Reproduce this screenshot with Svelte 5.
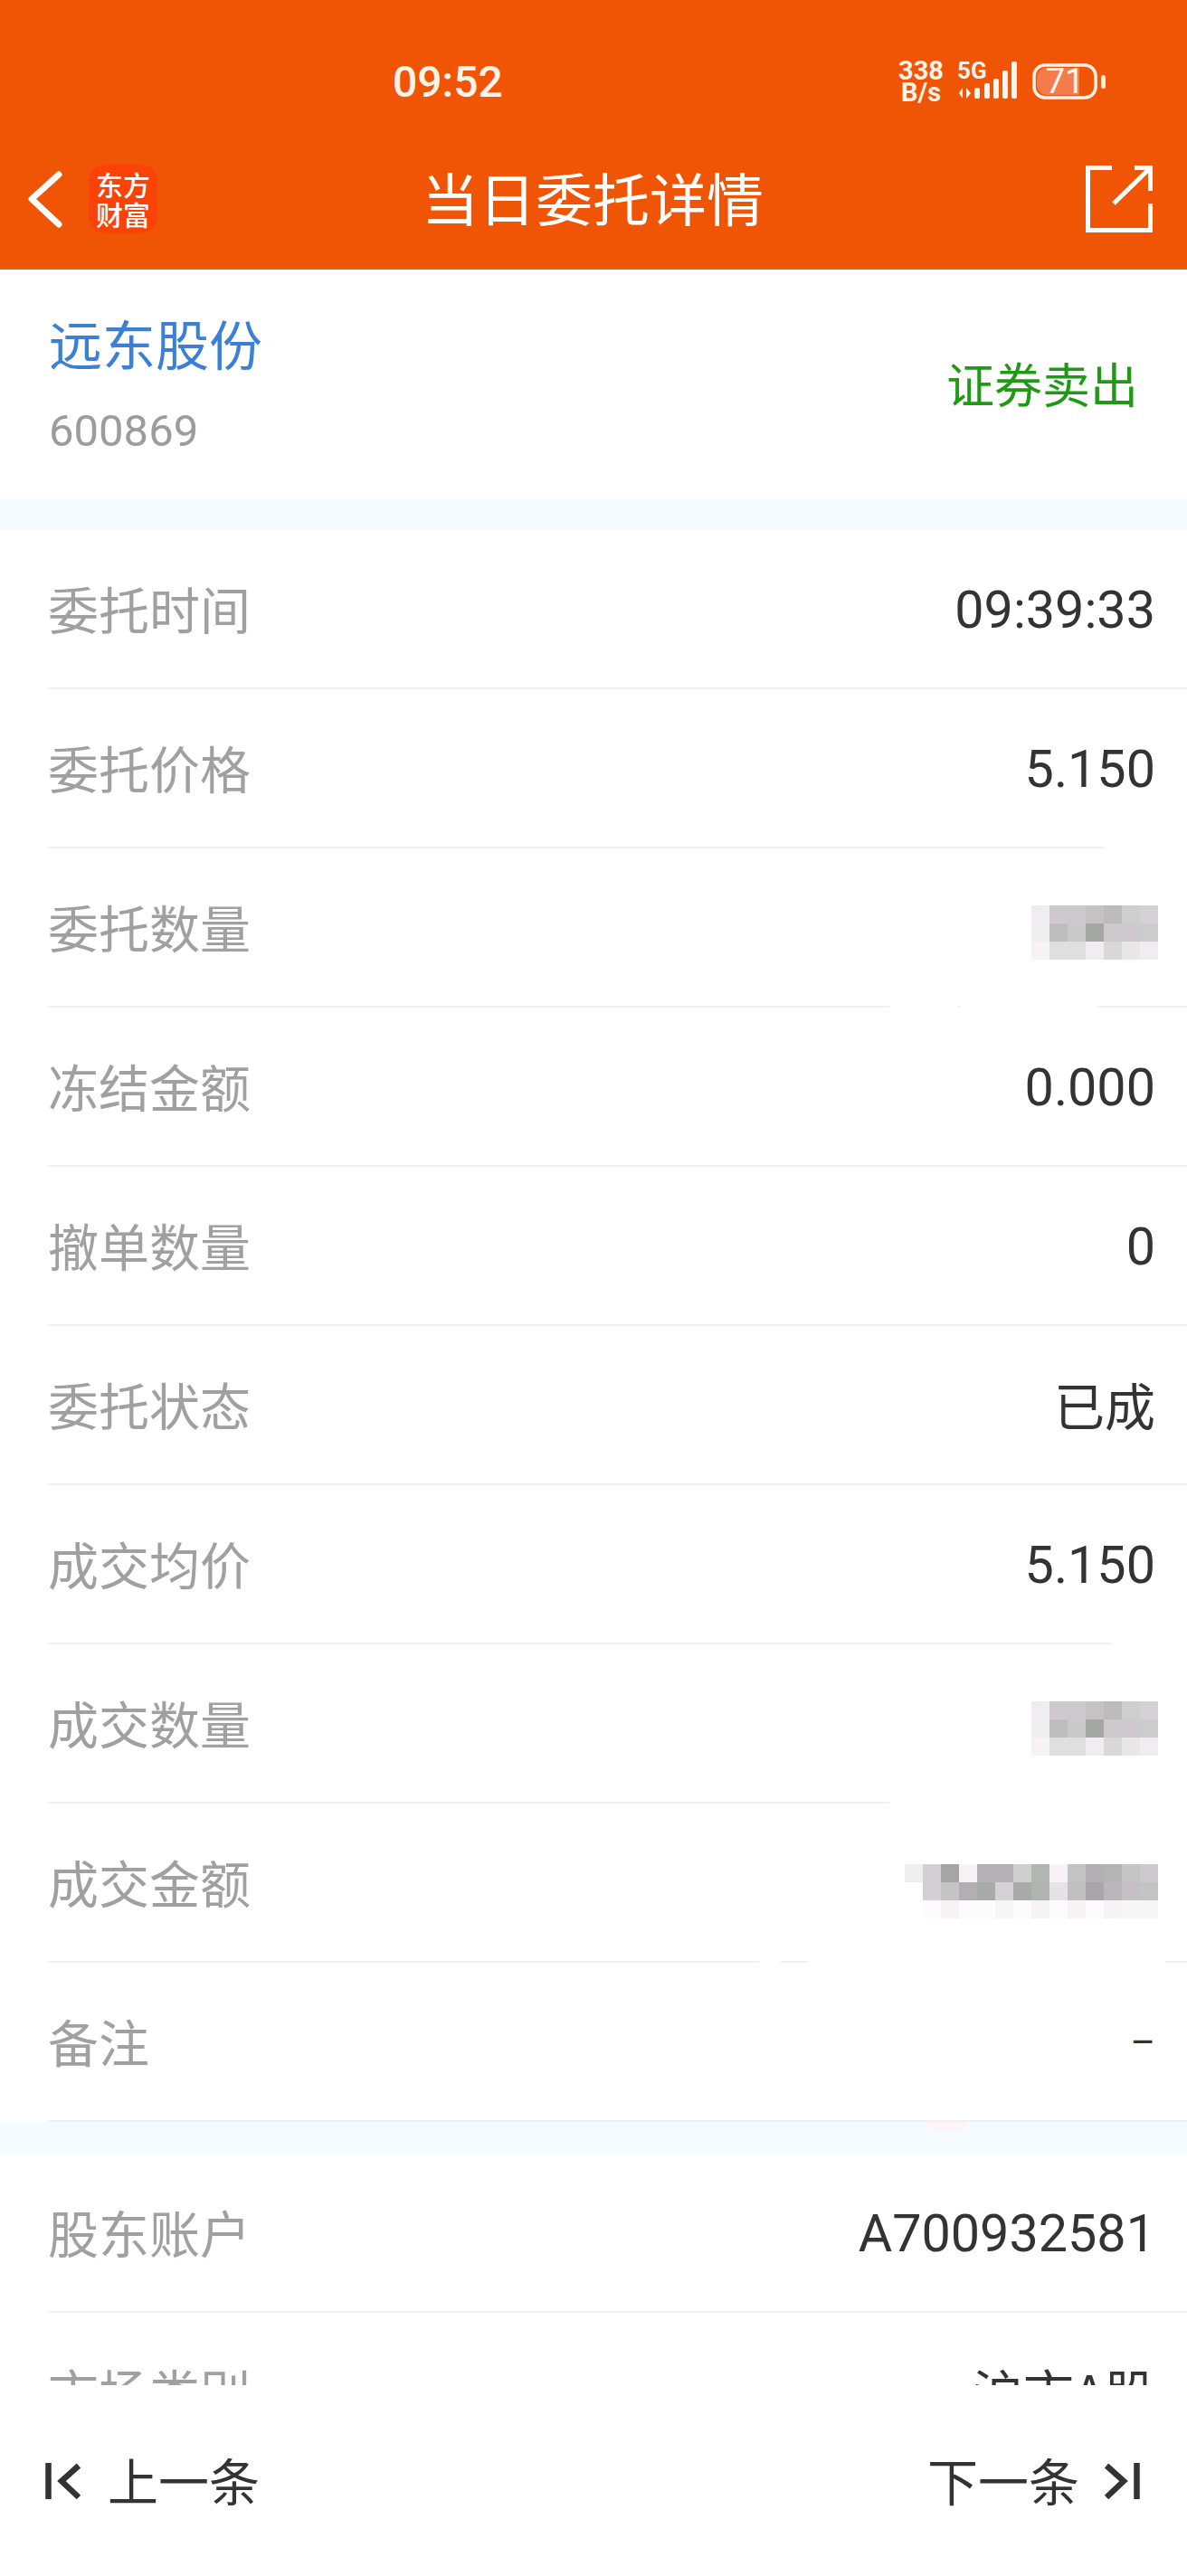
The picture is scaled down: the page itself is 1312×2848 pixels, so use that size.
<script>
  const mosaicA = [
    ["#f0edf0", "#cdc9cc", "#cdc9cc", "#c5c2c4", "#bcbcbc", "#cdcecd", "#d5d1d4"],
    ["#eeeeee", "#bcbdbc", "#c9cac9", "#a4a6a3", "#cdc9cc", "#cdc9cc", "#cbcccb"],
    ["#f6f2f6", "#dfdfdf", "#dfdfdf", "#f0edf0", "#d8d8d8", "#e7e7e7", "#f0edf0"],
  ];
  const mosaicB = [
    ["#eeeeee", "#d3cfd3", "#a4a6a3", "#f6f2f6", "#b5b1b4", "#b5b1b4", "#cfcfcf", "#b3b5b3", "#f6f2f6", "#c2c3c2", "#b3afb2", "#b3b5b3", "#c4c5c4", "#cdc9cc"],
    ["#ffffff", "#d3cfd3", "#c3c4c3", "#b2aeb1", "#a9aba9", "#d5d1d5", "#a9aba9", "#b1b3b1", "#e6e3e6", "#bfc0bf", "#a8a6a8", "#bab6b9", "#c3bfc2", "#c2c3c2"],
    ["#ffffff", "#fdfbfd", "#f6f2f6", "#fdfbfd", "#fdfbfd", "#f6f6f5", "#fdfbfd", "#f6f2f6", "#fdfbfd", "#f6f2f6", "#fdfbfd", "#f6f2f6", "#f6f6f5", "#f6f6f5"],
  ];

  // gaps = retouched stretches of the divider, as [left, width] in page px
  const orderRows = [
    { label: "委托时间", value: "09:39:33" },
    { label: "委托价格", value: "5.150", gaps: [[1220, 92]] },
    { label: "委托数量", mosaic: mosaicA, drop: 10, gaps: [[983, 76], [1062, 151]] },
    { label: "冻结金额", value: "0.000" },
    { label: "撤单数量", value: "0" },
    { label: "委托状态", value: "已成", cn: true },
    { label: "成交均价", value: "5.150", gaps: [[1228, 84]] },
    { label: "成交数量", mosaic: mosaicA, drop: 10, gaps: [[983, 329]] },
    { label: "成交金额", mosaic: mosaicB, drop: 18, gaps: [[839, 24], [893, 395]] },
    { label: "备注", value: "–", dash: true },
  ];
  const accountRows = [
    { label: "股东账户", value: "A700932581" },
    { label: "市场类别", value: "沪市A股", cn: true },
  ];
</script>

{#snippet row(item)}
  <div class="row">
    <span class="label">{item.label}</span>
    {#if item.mosaic}
      <div class="mosaic" style="margin-top: {item.drop}px">
        {#each item.mosaic as cells}
          <div class="mosaic-row">
            {#each cells as color}
              <i style="background: {color}"></i>
            {/each}
          </div>
        {/each}
      </div>
    {:else}
      <span class="value" class:cn={item.cn} class:dash={item.dash}>{item.value}</span>
    {/if}
    {#each item.gaps ?? [] as [left, width]}
      <b class="gap" style="left: {left}px; width: {width}px"></b>
    {/each}
  </div>
{/snippet}

<div class="page">
  <header class="header">
    <div class="status">
      <span class="time">09:52</span>
      <div class="status-icons">
        <div class="speed">
          <span>338</span>
          <span>B/s</span>
        </div>
        <svg class="net" width="66" height="44" viewBox="0 0 66 44">
          <text x="0" y="19" class="net-label">5G</text>
          <path d="M6 29v12l-4-6zM10 41V29l5 6z" />
          <rect x="19" y="29" width="6" height="12" rx="2" />
          <rect x="30" y="24" width="6" height="17" rx="2" />
          <rect x="40" y="19" width="6" height="22" rx="2" />
          <rect x="50" y="10" width="6" height="31" rx="2" />
          <rect x="60" y="0" width="6" height="41" rx="2" />
        </svg>
        <svg class="battery" width="81" height="40" viewBox="0 0 81 40">
          <path d="M16 5h36v30H16a11 11 0 0 1-11-11V16A11 11 0 0 1 16 5z" fill="#f67b4b" />
          <rect x="2" y="2" width="68" height="36" rx="12" fill="none" stroke="#fff0e6" stroke-width="3.6" />
          <text x="36" y="33" text-anchor="middle" class="battery-label">71</text>
          <rect x="76" y="13" width="5" height="15" rx="2.5" fill="#fff0e6" />
        </svg>
      </div>
    </div>
    <nav class="nav">
      <div class="nav-left">
        <svg width="44" height="66" viewBox="0 0 44 66">
          <path d="M37 6 7 33l30 28" fill="none" stroke="#fff" stroke-width="7" stroke-linecap="round" stroke-linejoin="round" />
        </svg>
        <div class="logo">
          <span>东方</span>
          <span>财富</span>
        </div>
      </div>
      <h1>当日委托详情</h1>
      <div class="nav-right">
        <svg width="78" height="78" viewBox="0 0 78 78">
          <path d="M31 4.500H4.500V73.500H73.500V44M33 44 73 5M56 4.500H73.500V30" fill="none" stroke="#fff" stroke-width="5" />
        </svg>
      </div>
    </nav>
  </header>

  <main class="content">
    <section class="stock">
      <div>
        <div class="stock-name">远东股份</div>
        <div class="stock-code">600869</div>
      </div>
      <span class="direction">证券卖出</span>
    </section>
    <div class="band"></div>
    <section>
      {#each orderRows as item}
        {@render row(item)}
      {/each}
    </section>
    <div class="band">
      <span class="smudge"></span>
    </div>
    <section>
      {#each accountRows as item}
        {@render row(item)}
      {/each}
    </section>
  </main>

  <footer class="footer">
    <div class="pager">
      <svg width="44" height="44" viewBox="0 0 44 44">
        <path d="M4.500 2V42M38 5 19 22l19 18" fill="none" stroke="#333" stroke-width="6.500" />
      </svg>
      <span>上一条</span>
    </div>
    <div class="pager next">
      <span>下一条</span>
      <svg width="44" height="44" viewBox="0 0 44 44">
        <path d="M39.500 2V42M6 5l19 17L6 40" fill="none" stroke="#333" stroke-width="6.500" />
      </svg>
    </div>
  </footer>
</div>

<style>
  :global(body) {
    margin: 0;
    background: #fff;
  }

  .page {
    width: 1312px;
    height: 2848px;
    display: flex;
    flex-direction: column;
    overflow: hidden;
    font-family: Roboto, "Noto Sans CJK SC", sans-serif;
    color: #333;
  }

  .header {
    flex: none;
    height: 298px;
    box-sizing: border-box;
    background: #f05405;
    border-bottom: 2px solid #e0601f;
    color: #fff;
  }

  .status {
    height: 160px;
    box-sizing: border-box;
    padding: 20px 90px 0 434px;
    display: flex;
    align-items: center;
    justify-content: space-between;
  }

  .time {
    font-size: 48px;
    font-weight: 500;
    color: #fff3ea;
  }

  .status-icons {
    display: flex;
    align-items: center;
  }

  .speed {
    width: 52px;
    margin-right: 14px;
    display: flex;
    flex-direction: column;
    align-items: center;
    font-size: 29px;
    font-weight: 700;
    line-height: 24px;
    color: #fff3ea;
  }

  .net {
    margin-right: 17px;
    fill: #fff3ea;
  }

  .net-label {
    font-family: Roboto, sans-serif;
    font-size: 26px;
    font-weight: 700;
  }

  .battery-label {
    font-family: Roboto, sans-serif;
    font-size: 38px;
    fill: #fff8f2;
  }

  .nav {
    height: 136px;
    box-sizing: border-box;
    padding: 0 36px 16px 28px;
    display: grid;
    grid-template-columns: 1fr auto 1fr;
    align-items: center;
  }

  .nav-left {
    display: flex;
    align-items: center;
    gap: 26px;
  }

  .nav-right {
    display: flex;
    justify-content: flex-end;
  }

  .logo {
    width: 76px;
    height: 76px;
    border-radius: 18px;
    background: #fc4307;
    display: flex;
    flex-direction: column;
    align-items: center;
    justify-content: center;
    font-family: "Noto Sans CJK SC", sans-serif;
    font-size: 30px;
    font-weight: 500;
    line-height: 33px;
    color: #fff;
  }

  h1 {
    margin: 0 0 6px 6px;
    font-family: "Noto Sans CJK SC", sans-serif;
    font-size: 63px;
    font-weight: 400;
    line-height: 1.2;
  }

  .content {
    flex: 1;
    min-height: 0;
    overflow: hidden;
  }

  .stock {
    height: 253px;
    box-sizing: border-box;
    padding: 0 54px 0 54px;
    display: flex;
    align-items: center;
    justify-content: space-between;
  }

  .stock-name {
    font-family: "Noto Sans CJK SC", sans-serif;
    font-size: 59px;
    line-height: 84px;
    color: #3b7fd6;
  }

  .stock-code {
    margin-top: 27px;
    margin-bottom: 6px;
    font-size: 49px;
    line-height: 58px;
    color: #9c9b9d;
  }

  .direction {
    margin-bottom: 3px;
    font-family: "Noto Sans CJK SC", sans-serif;
    font-size: 53px;
    color: #1f9a14;
  }

  .band {
    position: relative;
    height: 35px;
    background: #f6fbff;
  }

  .smudge {
    position: absolute;
    left: 1024px;
    top: 0;
    width: 44px;
    height: 10px;
    border-radius: 0 0 22px 22px;
    background: #fdf3f8;
  }

  .row {
    position: relative;
    height: 176px;
    box-sizing: border-box;
    padding: 0 35px 0 53px;
    display: flex;
    align-items: center;
    justify-content: space-between;
  }

  .row::after {
    content: "";
    position: absolute;
    left: 53px;
    right: 0;
    bottom: 0;
    height: 2px;
    background: #f0f0f2;
  }

  .label {
    margin-bottom: 5px;
    font-family: "Noto Sans CJK SC", sans-serif;
    font-size: 56px;
    color: #a09fa1;
  }

  .value {
    font-size: 57.500px;
    color: #333;
  }

  .value.cn {
    margin-bottom: 5px;
    font-family: "Noto Sans CJK SC", sans-serif;
    font-size: 56px;
  }

  .value.dash {
    font-size: 42px;
  }

  .mosaic {
    margin-right: -3px;
  }

  .mosaic-row {
    display: flex;
    justify-content: flex-end;
  }

  .mosaic i {
    display: block;
    width: 20px;
    height: 20px;
  }

  .gap {
    position: absolute;
    bottom: 0;
    height: 2px;
    background: #fff;
    z-index: 1;
  }

  .footer {
    flex: none;
    height: 211px;
    box-sizing: border-box;
    padding: 0 51px 0 49px;
    display: flex;
    align-items: center;
    justify-content: space-between;
    background: #fff;
  }

  .pager {
    display: flex;
    align-items: center;
    gap: 26px;
    font-family: "Noto Sans CJK SC", sans-serif;
    font-size: 56px;
    color: #333;
  }

  .pager.next {
    gap: 24px;
  }

  .pager span {
    margin-bottom: 5px;
  }
</style>
